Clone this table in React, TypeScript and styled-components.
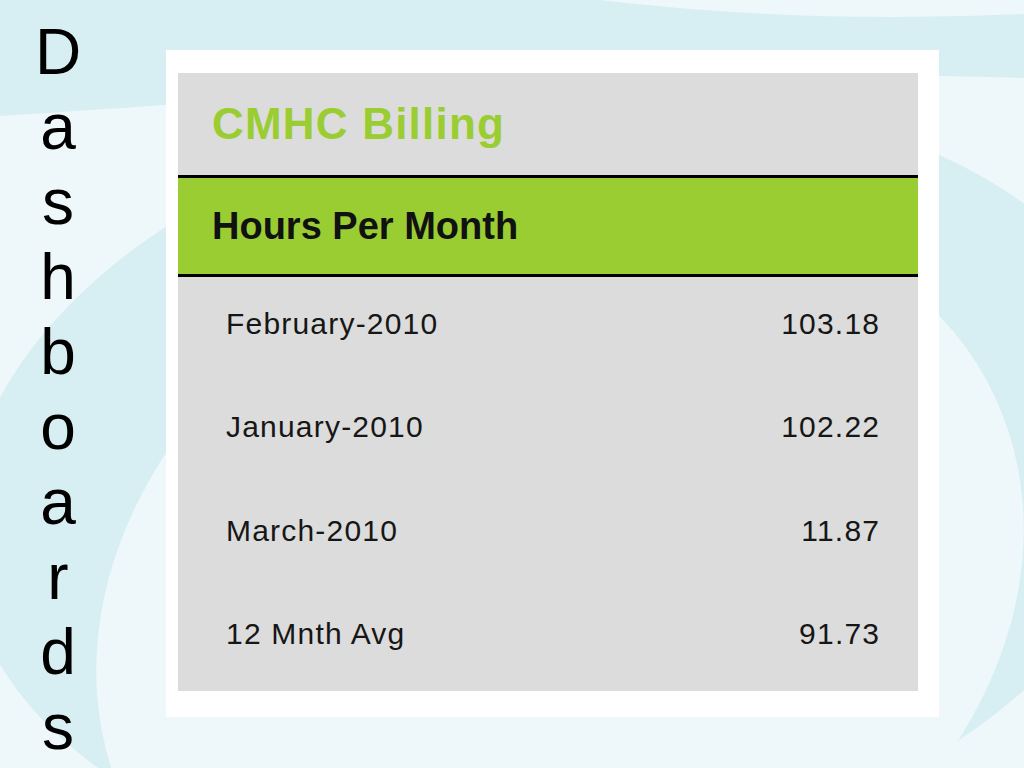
import React from 'react';
import styled, { createGlobalStyle } from 'styled-components';

interface RowData {
  label: string;
  value: string;
}

const rows: RowData[] = [
  { label: 'February-2010', value: '103.18' },
  { label: 'January-2010', value: '102.22' },
  { label: 'March-2010', value: '11.87' },
  { label: '12 Mnth Avg', value: '91.73' },
];

const GlobalStyle = createGlobalStyle`
  html, body {
    margin: 0;
    padding: 0;
    background: #eef8fa;
  }
  body {
    font-family: "Liberation Sans", Arial, sans-serif;
  }
`;

const Page = styled.main`
  position: relative;
  width: 1024px;
  height: 768px;
  overflow: hidden;
  display: flex;
  align-items: flex-start;
`;

const Backdrop = styled.svg`
  position: absolute;
  inset: 0;
  z-index: 0;
`;

const SideTitle = styled.h1`
  position: relative;
  z-index: 1;
  width: 116px;
  margin: 15px 0 0;
  display: flex;
  flex-direction: column;
  align-items: center;
  font-family: "Liberation Sans", Arial, sans-serif;
  font-weight: 400;
  font-size: 64px;
  line-height: 75px;
  color: #000;
`;

const Frame = styled.section`
  position: relative;
  z-index: 1;
  margin: 50px 0 0 50px;
  width: 773px;
  box-sizing: border-box;
  padding: 23px 21px 26px 12px;
  background: #fff;
`;

const Panel = styled.div`
  background: #dcdcdc;
  display: flex;
  flex-direction: column;
`;

const Title = styled.h2`
  margin: 0;
  height: 102px;
  padding-left: 34px;
  display: flex;
  align-items: center;
  font-size: 44px;
  line-height: 1;
  font-weight: 700;
  letter-spacing: 1.2px;
  color: #9acd32;
`;

const Band = styled.h3`
  margin: 0;
  height: 96px;
  padding-left: 34px;
  display: flex;
  align-items: center;
  border-top: 3px solid #000;
  border-bottom: 3px solid #000;
  background: #9acd32;
  font-size: 38px;
  line-height: 1;
  font-weight: 700;
  color: #111;
`;

const List = styled.div`
  display: flex;
  flex-direction: column;
`;

const Row = styled.div`
  height: 103.5px;
  box-sizing: border-box;
  padding: 0 39px 10px 48px;
  display: flex;
  align-items: center;
  justify-content: space-between;
  font-size: 30px;
  line-height: 1;
  letter-spacing: 1.2px;
  color: #161616;
`;

const Cell = styled.span<{ $right?: boolean }>`
  text-align: ${(p) => (p.$right ? 'right' : 'left')};
  margin-right: ${(p) => (p.$right ? '-1.2px' : '0')};
`;

const App = () => {
  return (
    <>
      <GlobalStyle />
      <Page>
        <Backdrop width="1024" height="768" viewBox="0 0 1024 768">
          <rect width="1024" height="768" fill="#eef8fa" />
          {/* swirl ring */}
          <ellipse
            cx="560"
            cy="485"
            rx="600"
            ry="385"
            transform="rotate(-8 560 485)"
            fill="#d7eff2"
          />
          <ellipse
            cx="560"
            cy="600"
            rx="480"
            ry="380"
            transform="rotate(-25 560 600)"
            fill="#eef8fa"
          />
          <path
            d="M0 0 H600 Q800 24 1024 14 V78 Q720 68 420 88 T0 116 Z"
            fill="#d7eff2"
          />
        </Backdrop>
        <SideTitle>
          {'Dashboards'.split('').map((ch, i) => (
            <span key={i}>{ch}</span>
          ))}
        </SideTitle>
        <Frame>
          <Panel>
            <Title>CMHC Billing</Title>
            <Band>Hours Per Month</Band>
            <List>
              {rows.map((r) => (
                <Row key={r.label}>
                  <Cell>{r.label}</Cell>
                  <Cell $right>{r.value}</Cell>
                </Row>
              ))}
            </List>
          </Panel>
        </Frame>
      </Page>
    </>
  );
};

export default App;
